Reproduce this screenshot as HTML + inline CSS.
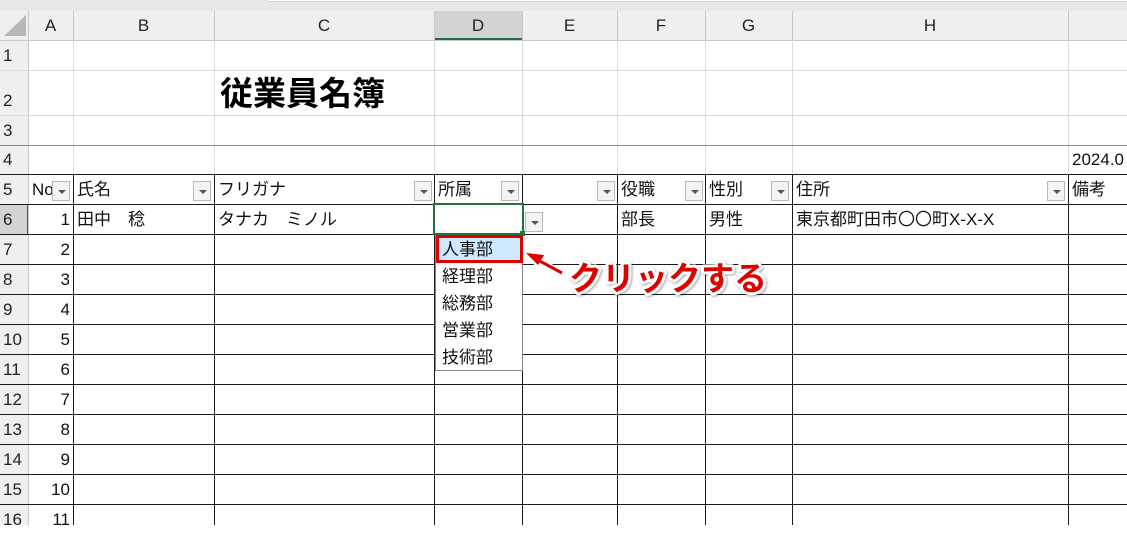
<!DOCTYPE html>
<html><head><meta charset="utf-8"><style>
*{margin:0;padding:0;box-sizing:border-box}
body{width:1127px;height:525px;overflow:hidden;background:#fff;position:relative;font-family:"Liberation Sans","Noto Sans CJK JP",sans-serif;font-size:17px;color:#111}
div{position:absolute}
.h{height:1px}.v{width:1px}
.g{background:#dcdcdc}.k{background:#1a1a1a}
.ch{top:11px;height:29px;text-align:center;line-height:29px;color:#222;font-size:17px}
.rh{left:0;width:28px;padding-left:3px;color:#222;font-size:17px;line-height:30px}
.t{line-height:30px;white-space:nowrap}
.fb{width:18px;height:20px;border:1px solid #b8b8b8;background:#f4f4f4}
.fb::after{content:"";position:absolute;left:5px;top:8px;border-left:4px solid transparent;border-right:4px solid transparent;border-top:4px solid #555}
.it{left:442px;font-size:17px;line-height:27px}
</style></head><body>
<div style="left:0;top:0;width:1127px;height:11px;background:#e8e8e8"></div>
<div style="left:265px;top:-6px;width:870px;height:8px;background:#fff;border:1px solid #d0d0d0;border-radius:5px"></div>
<div style="left:0;top:11px;width:1127px;height:29px;background:#efefef"></div>
<div style="left:0;top:40px;width:29px;height:485px;background:#efefef"></div>
<div style="left:434px;top:11px;width:88px;height:29px;background:#d3d3d3;border-bottom:2px solid #217346"></div>
<div style="left:0;top:204px;width:29px;height:30px;background:#d3d3d3;border-right:2px solid #217346"></div>
<div style="left:4px;top:15px;width:0;height:0;border-left:22px solid transparent;border-bottom:21px solid #b8b8b8"></div>
<div class="v" style="left:28px;top:11px;height:514px;background:#c8c8c8"></div>
<div class="v" style="left:73px;top:11px;height:29px;background:#c8c8c8"></div>
<div class="v" style="left:214px;top:11px;height:29px;background:#c8c8c8"></div>
<div class="v" style="left:434px;top:11px;height:29px;background:#c8c8c8"></div>
<div class="v" style="left:522px;top:11px;height:29px;background:#c8c8c8"></div>
<div class="v" style="left:617px;top:11px;height:29px;background:#c8c8c8"></div>
<div class="v" style="left:705px;top:11px;height:29px;background:#c8c8c8"></div>
<div class="v" style="left:792px;top:11px;height:29px;background:#c8c8c8"></div>
<div class="v" style="left:1068px;top:11px;height:29px;background:#c8c8c8"></div>
<div class="h" style="left:0;top:40px;width:1127px;background:#c8c8c8"></div>
<div class="ch" style="left:28px;width:45px">A</div>
<div class="ch" style="left:73px;width:141px">B</div>
<div class="ch" style="left:214px;width:220px">C</div>
<div class="ch" style="left:434px;width:88px">D</div>
<div class="ch" style="left:522px;width:95px">E</div>
<div class="ch" style="left:617px;width:88px">F</div>
<div class="ch" style="left:705px;width:87px">G</div>
<div class="ch" style="left:792px;width:276px">H</div>
<div class="v g" style="left:73px;top:40px;height:134px"></div>
<div class="v g" style="left:214px;top:40px;height:134px"></div>
<div class="v g" style="left:434px;top:40px;height:134px"></div>
<div class="v g" style="left:522px;top:40px;height:134px"></div>
<div class="v g" style="left:617px;top:40px;height:134px"></div>
<div class="v g" style="left:705px;top:40px;height:134px"></div>
<div class="v g" style="left:792px;top:40px;height:134px"></div>
<div class="v g" style="left:1068px;top:40px;height:134px"></div>
<div class="h g" style="left:0;top:70px;width:1127px"></div>
<div class="h g" style="left:0;top:115px;width:1127px"></div>
<div class="h" style="left:0;top:145px;width:1127px;background:#888"></div>
<div class="v k" style="left:73px;top:174px;height:351px"></div>
<div class="v k" style="left:214px;top:174px;height:351px"></div>
<div class="v k" style="left:434px;top:174px;height:351px"></div>
<div class="v k" style="left:522px;top:174px;height:351px"></div>
<div class="v k" style="left:617px;top:174px;height:351px"></div>
<div class="v k" style="left:705px;top:174px;height:351px"></div>
<div class="v k" style="left:792px;top:174px;height:351px"></div>
<div class="v k" style="left:1068px;top:174px;height:351px"></div>
<div class="h k" style="left:0;top:174px;width:1127px"></div>
<div class="h k" style="left:0;top:204px;width:1127px"></div>
<div class="h k" style="left:0;top:234px;width:1127px"></div>
<div class="h k" style="left:0;top:264px;width:1127px"></div>
<div class="h k" style="left:0;top:294px;width:1127px"></div>
<div class="h k" style="left:0;top:324px;width:1127px"></div>
<div class="h k" style="left:0;top:354px;width:1127px"></div>
<div class="h k" style="left:0;top:384px;width:1127px"></div>
<div class="h k" style="left:0;top:414px;width:1127px"></div>
<div class="h k" style="left:0;top:444px;width:1127px"></div>
<div class="h k" style="left:0;top:474px;width:1127px"></div>
<div class="h k" style="left:0;top:504px;width:1127px"></div>
<div class="rh" style="top:41px">1</div>
<div class="rh" style="top:86px">2</div>
<div class="rh" style="top:116px">3</div>
<div class="rh" style="top:145px">4</div>
<div class="rh" style="top:175px">5</div>
<div class="rh" style="top:205px">6</div>
<div class="rh" style="top:235px">7</div>
<div class="rh" style="top:265px">8</div>
<div class="rh" style="top:295px">9</div>
<div class="rh" style="top:325px">10</div>
<div class="rh" style="top:355px">11</div>
<div class="rh" style="top:385px">12</div>
<div class="rh" style="top:415px">13</div>
<div class="rh" style="top:445px">14</div>
<div class="rh" style="top:475px">15</div>
<div class="rh" style="top:505px">16</div>
<div class="t" style="left:29px;width:41px;top:205px;text-align:right">1</div>
<div class="t" style="left:29px;width:41px;top:235px;text-align:right">2</div>
<div class="t" style="left:29px;width:41px;top:265px;text-align:right">3</div>
<div class="t" style="left:29px;width:41px;top:295px;text-align:right">4</div>
<div class="t" style="left:29px;width:41px;top:325px;text-align:right">5</div>
<div class="t" style="left:29px;width:41px;top:355px;text-align:right">6</div>
<div class="t" style="left:29px;width:41px;top:385px;text-align:right">7</div>
<div class="t" style="left:29px;width:41px;top:415px;text-align:right">8</div>
<div class="t" style="left:29px;width:41px;top:445px;text-align:right">9</div>
<div class="t" style="left:29px;width:41px;top:475px;text-align:right">10</div>
<div class="t" style="left:29px;width:41px;top:505px;text-align:right">11</div>
<div style="left:220px;top:74px;font-size:33px;font-weight:bold;line-height:40px;color:#000">従業員名簿</div>
<div class="t" style="left:1072px;top:145px">2024.0</div>
<div class="t" style="left:32px;top:175px">No</div>
<div class="t" style="left:77px;top:175px">氏名</div>
<div class="t" style="left:218px;top:175px">フリガナ</div>
<div class="t" style="left:438px;top:175px">所属</div>
<div class="t" style="left:621px;top:175px">役職</div>
<div class="t" style="left:709px;top:175px">性別</div>
<div class="t" style="left:796px;top:175px">住所</div>
<div class="t" style="left:1072px;top:175px">備考</div>
<div class="fb" style="left:52px;top:181px"></div>
<div class="fb" style="left:193px;top:181px"></div>
<div class="fb" style="left:414px;top:181px"></div>
<div class="fb" style="left:501px;top:181px"></div>
<div class="fb" style="left:597px;top:181px"></div>
<div class="fb" style="left:685px;top:181px"></div>
<div class="fb" style="left:771px;top:181px"></div>
<div class="fb" style="left:1047px;top:181px"></div>
<div class="t" style="left:77px;top:205px">田中　稔</div>
<div class="t" style="left:218px;top:205px">タナカ　ミノル</div>
<div class="t" style="left:621px;top:205px">部長</div>
<div class="t" style="left:709px;top:205px">男性</div>
<div class="t" style="left:796px;top:205px">東京都町田市〇〇町X-X-X</div>
<div style="left:433px;top:203px;width:91px;height:32px;border:2px solid #217346;background:#fff"></div>
<div style="left:520px;top:231px;width:5px;height:5px;background:#217346"></div>
<div class="fb" style="left:525px;top:212px"></div>
<div style="left:435px;top:235px;width:88px;height:136px;background:#fff;border:1px solid #888"></div>
<div style="left:436px;top:235px;width:87px;height:28px;background:#cde8ff;border:3px solid #e00000"></div>
<div class="it" style="top:236px">人事部</div>
<div class="it" style="top:263px">経理部</div>
<div class="it" style="top:290px">総務部</div>
<div class="it" style="top:317px">営業部</div>
<div class="it" style="top:344px">技術部</div>
<svg style="position:absolute;left:0;top:0" width="1127" height="525">
<line x1="562" y1="273" x2="536" y2="259" stroke="#fff" stroke-width="6" stroke-linecap="round"/>
<polygon points="525,252 545,254 538,266" fill="#fff" stroke="#fff" stroke-width="4" stroke-linejoin="round"/>
<line x1="562" y1="273" x2="536" y2="259" stroke="#e00000" stroke-width="3"/>
<polygon points="526,253 544,255 538,265" fill="#e00000"/>
<text x="569" y="290" font-family="Liberation Sans, Noto Sans CJK JP, sans-serif" font-size="33" font-weight="bold" fill="#e00000" stroke="#fff" stroke-width="6" paint-order="stroke" stroke-linejoin="round" style="filter:drop-shadow(1px 1px 1px rgba(0,0,0,.35))">クリックする</text>
</svg>
</body></html>
